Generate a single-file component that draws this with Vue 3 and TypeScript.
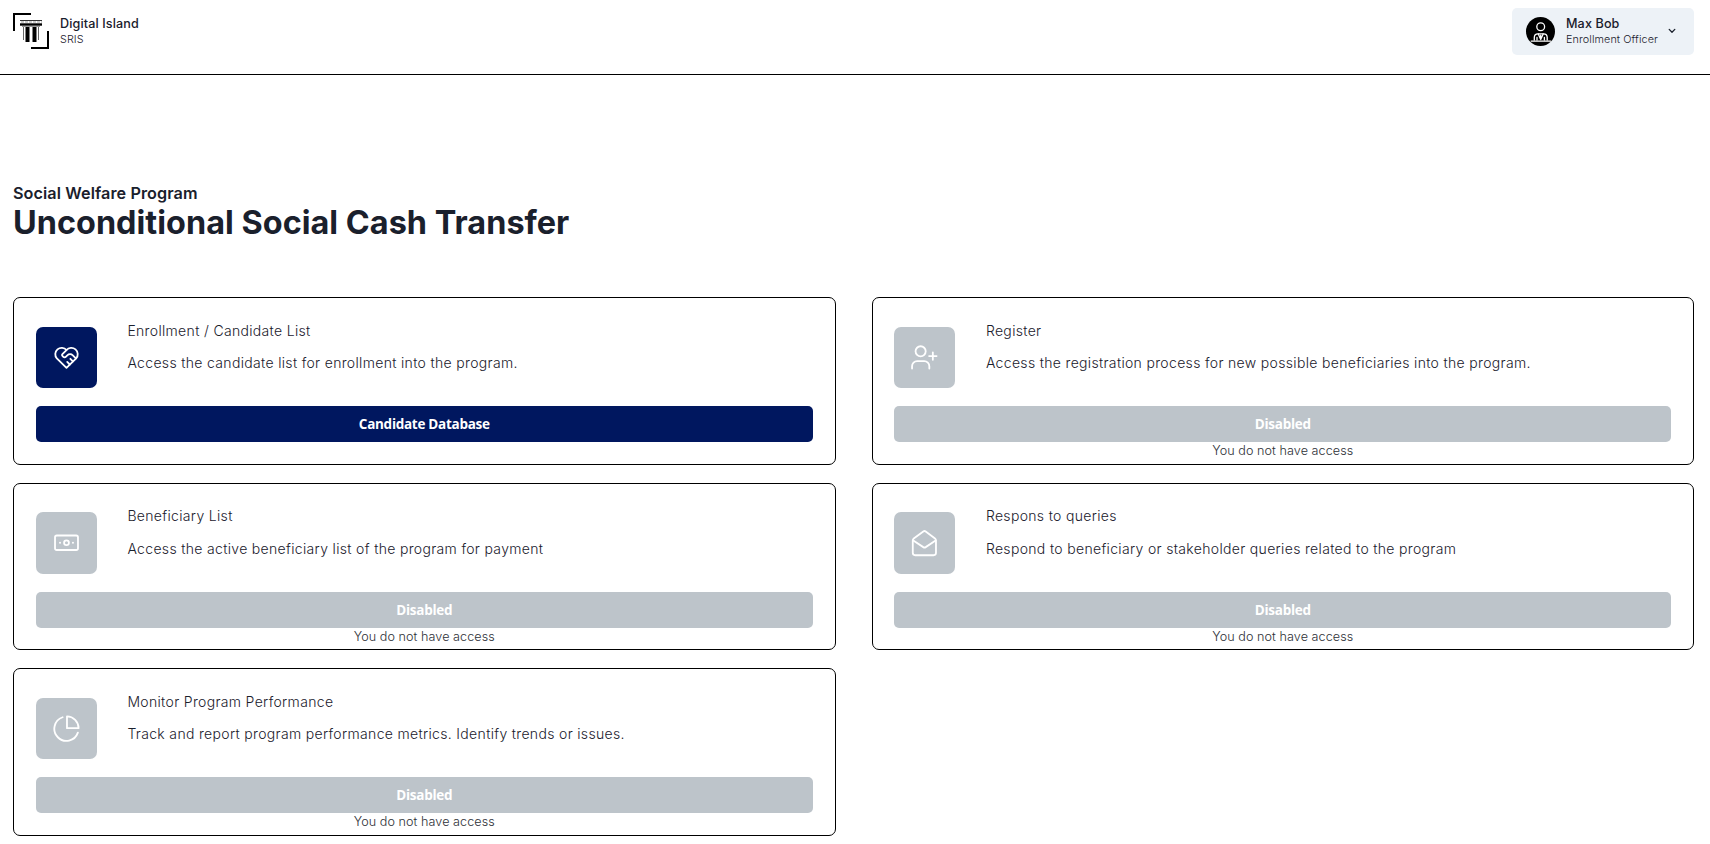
<script setup lang="ts">
type IconName = 'heart' | 'user' | 'cash' | 'mail' | 'pie'

interface ProgramCard {
  icon: IconName
  title: string
  text: string
  action?: string
}

const cards: ProgramCard[] = [
  {
    icon: 'heart',
    title: 'Enrollment / Candidate List',
    text: 'Access the candidate list for enrollment into the program.',
    action: 'Candidate Database',
  },
  {
    icon: 'user',
    title: 'Register',
    text: 'Access the registration process for new possible beneficiaries into the program.',
  },
  {
    icon: 'cash',
    title: 'Beneficiary List',
    text: 'Access the active beneficiary list of the program for payment',
  },
  {
    icon: 'mail',
    title: 'Respons to queries',
    text: 'Respond to beneficiary or stakeholder queries related to the program',
  },
  {
    icon: 'pie',
    title: 'Monitor Program Performance',
    text: 'Track and report program performance metrics. Identify trends or issues.',
  },
]
</script>

<template>
  <div class="page">
    <header class="header">
      <div class="brand">
        <svg class="logo" viewBox="0 0 36 36" width="36" height="36">
          <path d="M1 18V1H18M18 35H35V18" fill="none" stroke="#000" stroke-width="2" />
          <path d="M7 7.5H29" stroke="#333" stroke-width="1" />
          <path d="M8 9H29" stroke="#ccc" stroke-width="2" stroke-dasharray="3 1" />
          <path d="M7 11.5H29" stroke="#000" stroke-width="2.4" />
          <path d="M9 13.5H27" stroke="#999" stroke-width="1" />
          <path d="M14.5 14V29M21.5 14V29" stroke="#000" stroke-width="4" />
          <path d="M10.5 14V27M25.5 14V27" stroke="#666" stroke-width="1" />
        </svg>
        <div class="names">
          <span class="name">Digital Island</span>
          <span class="sub">SRIS</span>
        </div>
      </div>
      <button class="account" type="button">
        <svg class="avatar" viewBox="0 0 29 29" width="29" height="29">
          <circle cx="14.5" cy="14.5" r="14.5" fill="#000" />
          <g fill="none" stroke="#fff" stroke-width="1.3" stroke-linecap="round" stroke-linejoin="round">
            <circle cx="14.7" cy="9.8" r="3.9" />
            <path d="M8.3 23V20.5Q8.3 16.8 12 16.8H17.5Q21.2 16.8 21.2 20.5V23" />
            <path d="M12.3 17L14.7 22.6L17.2 17M14.7 18.2V21.5M11 20.5V23M18.4 20.5V23" />
            <path d="M5.2 24.1H24.6" stroke-width="1.4" />
          </g>
        </svg>
        <span class="names">
          <span class="name">Max Bob</span>
          <span class="sub">Enrollment Officer</span>
        </span>
        <svg class="chevron" viewBox="0 0 8 6" width="8" height="6">
          <path d="M1.2 1.4L4 4.2L6.8 1.4" fill="none" stroke="#1a202c" stroke-width="1.3" stroke-linecap="round" stroke-linejoin="round" />
        </svg>
      </button>
    </header>

    <main class="main">
      <p class="eyebrow">Social Welfare Program</p>
      <h1 class="heading">Unconditional Social Cash Transfer</h1>

      <section class="grid">
        <article v-for="card in cards" :key="card.title" class="card">
          <div class="top">
            <div class="tile" :class="{ on: card.action }">
              <svg class="icon" viewBox="0 0 24 24" width="29" height="29">
                <template v-if="card.icon === 'heart'">
                  <path d="M20 12.700l-8 7.900l-8 -7.900a5.250 5.250 0 1 1 8 -6.900a5.250 5.250 0 1 1 8 6.900" />
                  <path d="M12 5.800l-3.400 3.500a1 1 0 0 0 0 1.414l.543 .543c.69 .69 1.81 .69 2.5 0l1 -1a3.300 3.300 0 0 1 4.600 0l2.500 2.500" />
                  <path d="M12.600 15.700l2.100 2.100M15.200 13.100l2.100 2.100" />
                </template>
                <template v-else-if="card.icon === 'user'">
                  <circle cx="8.800" cy="6.900" r="4.200" />
                  <path d="M1.700 21.200v-2a4.200 4.200 0 0 1 4.200 -4.200h5.900a4.200 4.200 0 0 1 4.200 4.200v2M18.900 7.700v6.200M15.800 10.800h6.200" />
                </template>
                <template v-else-if="card.icon === 'cash'">
                  <rect x="2.500" y="5.400" width="19" height="12" rx="1.500" />
                  <circle cx="12" cy="11.400" r="2" />
                  <path d="M6.600 11.400h.1M17.300 11.400h.1" />
                </template>
                <template v-else-if="card.icon === 'mail'">
                  <path d="M2.300 9.500v10.200a2 2 0 0 0 2 2h15.200a2 2 0 0 0 2 -2V9.500Q21.500 8.500 20.700 7.900L13 2Q12 1.300 11 2L3.100 7.900Q2.300 8.500 2.300 9.500Z" />
                  <path d="M2.700 9.600l8.300 5.400q1 .6 2 0l8.200 -5.400" />
                </template>
                <template v-else>
                  <path d="M8.800 2.700A10 10 0 1 0 21.400 15.400" />
                  <path d="M12.400 2V11.700H22A9.800 9.800 0 0 0 12.400 2Z" />
                </template>
              </svg>
            </div>
            <div class="copy">
              <h2 class="title">{{ card.title }}</h2>
              <p class="text">{{ card.text }}</p>
            </div>
          </div>
          <button class="action" :class="{ on: card.action }" type="button" :disabled="!card.action">
            {{ card.action ?? 'Disabled' }}
          </button>
          <p v-if="!card.action" class="note">You do not have access</p>
        </article>
      </section>
    </main>
  </div>
</template>

<style>
body {
  margin: 0;
  background: #fff;
}
</style>

<style scoped>
.page {
  box-sizing: border-box;
  height: 844px;
  overflow: hidden;
  color: #1a202c;
  font-family: Inter, 'Liberation Sans', sans-serif;
  font-optical-sizing: none;
}
h1,
h2,
p {
  margin: 0;
}
button {
  border: 0;
  font: inherit;
  color: inherit;
}
.header {
  box-sizing: border-box;
  display: flex;
  align-items: flex-start;
  justify-content: space-between;
  height: 75px;
  padding: 8px 16px 0 13px;
  border-bottom: 1px solid #000;
}
.brand {
  display: flex;
  align-items: center;
  gap: 11px;
  height: 46px;
}
.names {
  display: flex;
  flex-direction: column;
  text-align: left;
}
.name {
  font-size: 12.6px;
  font-weight: 500;
  line-height: 16px;
  letter-spacing: 0.12px;
}
.sub {
  font-size: 10.8px;
  font-weight: 300;
  line-height: 15px;
  letter-spacing: 0.1px;
}
.account {
  display: flex;
  align-items: center;
  width: 182px;
  height: 47px;
  padding: 0 0 0 14px;
  border-radius: 5px;
  background: #edf2f7;
}
.account .names {
  margin-left: 11px;
  margin-top: -1px;
}
.avatar {
  flex: none;
}
.chevron {
  margin: 0 0 1px 10px;
  flex: none;
}
.main {
  padding: 108px 16px 0 13px;
}
.eyebrow {
  font-size: 16.2px;
  font-weight: 600;
  line-height: 21px;
  letter-spacing: 0.08px;
}
.heading {
  font-size: 32.4px;
  font-weight: 700;
  line-height: 38px;
  letter-spacing: 0.03px;
}
.grid {
  display: grid;
  grid-template-columns: 1fr 1fr;
  grid-auto-rows: 167.6px;
  gap: 17.8px 36px;
  margin-top: 55.2px;
}
.card {
  box-sizing: border-box;
  display: flex;
  flex-direction: column;
  padding: 28.85px 21.9px 0;
  border: 1px solid #000;
  border-radius: 7px;
}
.top {
  display: flex;
  gap: 30.5px;
  height: 61.15px;
}
.tile {
  display: flex;
  align-items: center;
  justify-content: center;
  flex: none;
  width: 61px;
  height: 61.2px;
  border-radius: 7px;
  background: #bdc4ca;
}
.tile.on,
.action.on {
  background: #00175f;
}
.icon {
  fill: none;
  stroke: #fff;
  stroke-width: 1.5;
  stroke-linecap: round;
  stroke-linejoin: round;
}
.title,
.text {
  font-size: 14px;
  font-weight: 300;
  line-height: 22px;
  letter-spacing: 0.33px;
}
.title {
  margin-top: -7px;
}
.text {
  margin-top: 10.4px;
}
.action {
  height: 36px;
  flex: none;
  margin-top: 18px;
  padding: 0;
  border-radius: 5px;
  background: #bdc4ca;
  color: #fff;
  font-family: 'Open Sans', 'Noto Sans', sans-serif;
  font-size: 13.5px;
  font-weight: 700;
  line-height: 36px;
  letter-spacing: -0.28px;
}
.note {
  font-size: 12.6px;
  font-weight: 300;
  line-height: 18px;
  letter-spacing: 0.07px;
  text-align: center;
  color: #2d3036;
}
</style>
